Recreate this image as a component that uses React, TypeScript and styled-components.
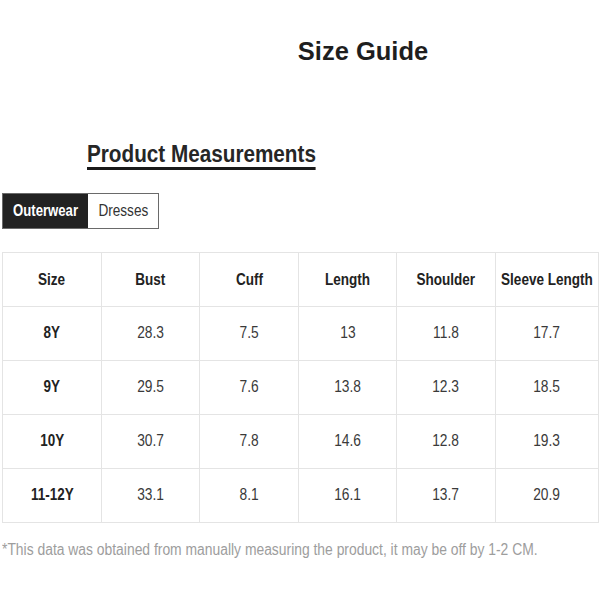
import React, { useState } from "react";
import styled, { createGlobalStyle } from "styled-components";

const GlobalStyle = createGlobalStyle`
  html, body { margin: 0; padding: 0; background: #ffffff; }
  body { font-family: "Liberation Sans", Arial, sans-serif; color: #222; }
`;

const FONT = `"Liberation Sans", Arial, sans-serif`;

const Page = styled.div`
  width: 600px;
  display: flex;
  flex-direction: column;
  align-items: flex-start;
`;

const Squeeze = styled.span<{ $sx: number; $origin?: string }>`
  display: inline-block;
  white-space: nowrap;
  margin: ${(p) => (p.$origin ? "0" : "0 -30px")};
  transform: scaleX(${(p) => p.$sx});
  transform-origin: ${(p) => p.$origin || "center"};
`;

const Title = styled.h1`
  align-self: stretch;
  margin: 35.5px 0 0 0;
  padding-left: 126px;
  text-align: center;
  font-family: ${FONT};
  font-size: 25.5px;
  line-height: 30px;
  font-weight: 700;
  color: #1e1e1e;
`;

const SectionTitle = styled.h2`
  margin: 75.2px 0 0 87px;
  display: inline-block;
  font-family: ${FONT};
  font-size: 23px;
  line-height: 26px;
  font-weight: 700;
  color: #262626;
  border-bottom: 3px solid #1a1a1a;
  white-space: nowrap;
  transform: scaleX(0.9);
  transform-origin: left center;
`;

const Tabs = styled.div`
  margin: 23.3px 0 0 2px;
  display: flex;
  border: 1px solid #6a6a6a;
`;

const Tab = styled.button<{ $active?: boolean; $w: number }>`
  width: ${(p) => p.$w}px;
  height: 34px;
  padding: 0;
  border: none;
  display: flex;
  align-items: center;
  justify-content: center;
  background: ${(p) => (p.$active ? "#222222" : "#ffffff")};
  color: ${(p) => (p.$active ? "#ffffff" : "#333333")};
  font-family: ${FONT};
  font-size: 16px;
  font-weight: ${(p) => (p.$active ? 700 : 400)};
  cursor: pointer;
`;

const Table = styled.table`
  margin: 23px 0 0 2px;
  width: 596px;
  border-collapse: collapse;
  table-layout: fixed;
`;

const HeadCell = styled.th`
  height: 53px;
  border: 1px solid #e4e4e4;
  padding: 0;
  text-align: center;
  font-family: ${FONT};
  font-size: 16.5px;
  font-weight: 700;
  color: #222;
`;

const Cell = styled.td<{ $bold?: boolean }>`
  height: 53px;
  border: 1px solid #e4e4e4;
  padding: 0;
  text-align: center;
  font-family: ${FONT};
  font-size: 16px;
  font-weight: ${(p) => (p.$bold ? 700 : 400)};
  color: ${(p) => (p.$bold ? "#222" : "#3a3a3a")};
`;

const Note = styled.p`
  margin: 17px 0 0 2px;
  font-family: ${FONT};
  font-size: 16px;
  line-height: 20px;
  color: #9d9d9d;
`;

const headers = ["Size", "Bust", "Cuff", "Length", "Shoulder", "Sleeve Length"];
const rows = [
  ["8Y", "28.3", "7.5", "13", "11.8", "17.7"],
  ["9Y", "29.5", "7.6", "13.8", "12.3", "18.5"],
  ["10Y", "30.7", "7.8", "14.6", "12.8", "19.3"],
  ["11-12Y", "33.1", "8.1", "16.1", "13.7", "20.9"],
];
const widths = [99, 98, 99, 98, 99, 103];
const tabs = [
  { label: "Outerwear", w: 85 },
  { label: "Dresses", w: 70 },
];

export default function App() {
  const [tab, setTab] = useState("Outerwear");
  return (
    <>
      <GlobalStyle />
      <Page>
        <Title>Size Guide</Title>
        <SectionTitle>Product Measurements</SectionTitle>
        <Tabs>
          {tabs.map((t) => (
            <Tab key={t.label} $w={t.w} $active={tab === t.label} onClick={() => setTab(t.label)}>
              <Squeeze $sx={tab === t.label ? 0.82 : 0.85}>{t.label}</Squeeze>
            </Tab>
          ))}
        </Tabs>
        <Table>
          <colgroup>
            {widths.map((w, i) => (
              <col key={i} style={{ width: w }} />
            ))}
          </colgroup>
          <thead>
            <tr>
              {headers.map((h) => (
                <HeadCell key={h}>
                  <Squeeze $sx={0.82}>{h}</Squeeze>
                </HeadCell>
              ))}
            </tr>
          </thead>
          <tbody>
            {rows.map((r) => (
              <tr key={r[0]}>
                {r.map((v, i) => (
                  <Cell key={i} $bold={i === 0}>
                    <Squeeze $sx={i === 0 ? 0.84 : 0.86}>{v}</Squeeze>
                  </Cell>
                ))}
              </tr>
            ))}
          </tbody>
        </Table>
        <Note>
          <Squeeze $sx={0.867} $origin="left center">
            *This data was obtained from manually measuring the product, it may be off by 1-2 CM.
          </Squeeze>
        </Note>
      </Page>
    </>
  );
}
